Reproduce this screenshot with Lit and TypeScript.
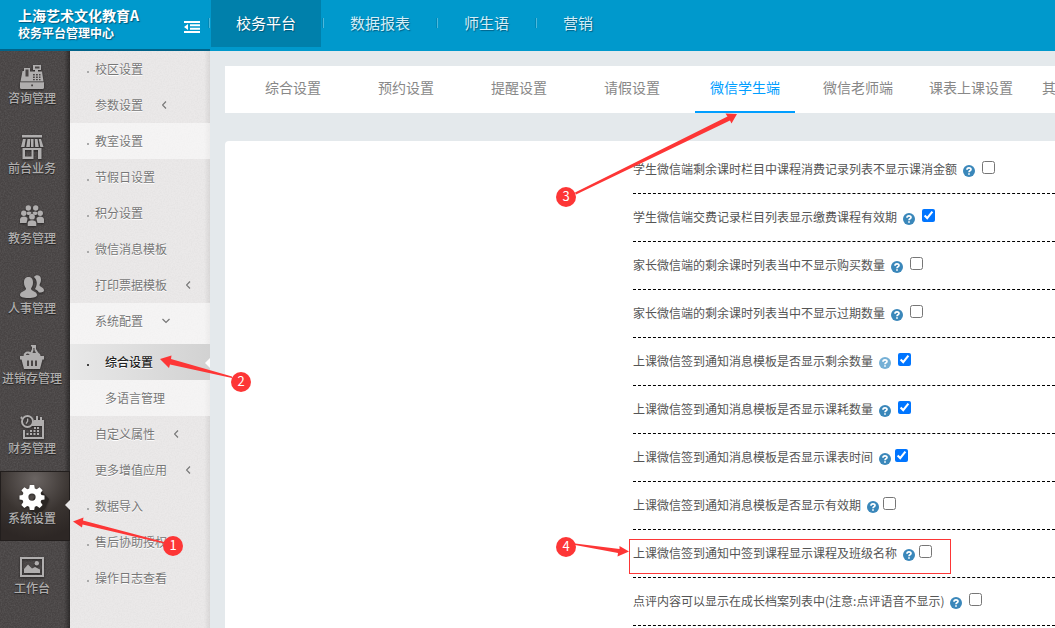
import { LitElement, html, svg, css, nothing } from "lit";
import { customElement, state } from "lit/decorators.js";
import { classMap } from "lit/directives/class-map.js";

const railIcons: Record<string, unknown> = {
  register: svg`<path d="M13 0h8v5h-3v1.500h4l1.500 10h-23L2.500 6H4V3h6v3.500h5V5h-2z"/><path d="M0 17.300h24v5.200a1.500 1.500 0 0 1-1.500 1.500h-21A1.500 1.500 0 0 1 0 22.500z"/><path class="cut" d="M15 1.500h4.500v2H15zM5.500 4.500h3v7h-3zM13 9h1.800v1.500H13zm3 0h1.800v1.500H16zm3 0h1.500v1.500H19zM13 11.500h1.800V13H13zm3 0h1.800V13H16zm3 0h1.500V13H19zM13 14h1.800v1.300H13zm3 0h1.800v1.300H16zm3 0h1.500v1.300H19zM11.200 19.500H13v1.800h-1.800z"/>`,
  shop: svg`<path d="M2 0h20v2.500H2zM3 4h2.800L4.500 12H1zM7.500 4h2.800l-.5 8H6.200zM11 4h2.500v8H11zM14.800 4h2.700l1.300 8h-3.600zM18.800 4H21l2.500 8h-3.200z"/><path d="M2.500 13h19v11H18v-9h-4.500v9h-11zM5 15v6.500h6.500V15z" fill-rule="evenodd"/>`,
  people: svg`<circle cx="8.300" cy="3" r="2.700"/><circle cx="15.700" cy="3" r="2.700"/><circle cx="3.800" cy="8.300" r="2.700"/><circle cx="20.200" cy="8.300" r="2.700"/><circle cx="12" cy="11.700" r="2.900"/><path d="M6.500 7.500c2-2 5-1 5 .5L9.500 10h-2zM17.500 7.500c-2-2-5-1-5 .5l2 2h2zM0 18v-3.500c0-2 2-3 4-3s3.500 1 3.500 2.500L6.500 18zM24 18v-3.500c0-2-2-3-4-3s-3.500 1-3.500 2.500l1 4zM7.700 21v-3c0-2 2-2.800 4.300-2.800s4.300.8 4.300 2.800v3z"/>`,
  users: svg`<path d="M14 2c1.500-2.500 7-2.500 7 2.500 0 2.500-1 4-1.500 5.500 0 2 4.500 2 4.500 5.500 0 1.500-2 2-5 2-1.500-2.500-3.500-2.800-4-3.500 2-3.500 3-8-1-12z"/><path d="M4 7.500C4 3.500 6 2 8.500 2s4.500 1.500 4.500 5.500c0 3-1 4.500-2 6 0 3 6 2.500 6 6.500 0 2-3 3-8.500 3S0 22 0 20c0-4 6-3.500 6-6.500-1-1.500-2-3-2-6z"/>`,
  basket: svg`<path d="M11 0h5v4l2.500 4c1.500.5 2 1.500 2 3h-17c0-3 2-4.500 4.500-4.500 1 0 2 .3 2.500.8L12 4V1.500h-1z"/><path d="M0 11h24v3.500h-1.500L20 24H4L1.500 14.500H0z"/><path class="cut" d="M7 15.500h2V21H7zm4 0h2V21h-2zm4 0h2V21h-2zM13.300 3h1.200v2l1.500 3h-3.500l1-3zM6 10c0-2 3-2 3.500 0z"/>`,
  calendar: svg`<path fill-rule="evenodd" d="M14 5h10v19H3v-9h2v7h17V11H12V9z"/><circle cx="7.500" cy="6.500" r="5.500" fill="none" stroke="currentColor" stroke-width="2"/><path d="M7 3.500h1.300v3L6.500 9l-1-.7L7 6zM16 1h2v5h-2zm4 1h2v4h-2zM14 12h2v2h-2zm3 0h2v2h-2zm-7 3h2v2h-2zm3.500 0h2v2h-2zm3.500 0h2v2h-2zM6.500 18h2v2h-2zm3.500 0h2v2h-2zm3.500 0h2v2h-2zm3.500 0h2v2h-2zM0 3l2-2 1 4z"/>`,
  gear: svg`<path class="cast" d="M20 5l9 9-4 9-8 6-9-7z"/><path fill-rule="evenodd" d="M9.800 0h4.400l.6 3.400 2 .8L19.600 2.200l3 3-2 2.900.8 2 3.100.5v3.800l-3.100.7-.8 2 2 2.800-3 3-2.800-2-2 .9-.6 3.200H9.800l-.6-3.200-2-.9-2.900 2-3-3 2-2.800-.8-2L-.5 14.400v-3.800l3.100-.5.8-2-2-2.900 3-3 2.900 2 1.900-.8zM12 8.500a3.600 3.600 0 1 0 0 7.200 3.600 3.600 0 0 0 0-7.200z"/>`,
  image: svg`<path fill-rule="evenodd" d="M0 2h24v20H0zM2 4v16h20V4z"/><path d="M4 18v-4l4-4.500 4 4 3-1.500 5 2.500V18z"/><circle cx="16.800" cy="8.300" r="2.200"/>`,
};

const rail = [
  ["register", "咨询管理"],
  ["shop", "前台业务"],
  ["people", "教务管理"],
  ["users", "人事管理"],
  ["basket", "进销存管理"],
  ["calendar", "财务管理"],
  ["gear", "系统设置"],
  ["image", "工作台"],
];

interface MenuEntry {
  label: string;
  more?: boolean;
  lit?: boolean;
  children?: string[];
}

const menu: MenuEntry[] = [
  { label: "校区设置" },
  { label: "参数设置", more: true },
  { label: "教室设置", lit: true },
  { label: "节假日设置" },
  { label: "积分设置" },
  { label: "微信消息模板" },
  { label: "打印票据模板", more: true },
  { label: "系统配置", children: ["综合设置", "多语言管理"] },
  { label: "自定义属性", more: true },
  { label: "更多增值应用", more: true },
  { label: "数据导入" },
  { label: "售后协助授权" },
  { label: "操作日志查看" },
];

const tabs = ["综合设置", "预约设置", "提醒设置", "请假设置", "微信学生端", "微信老师端", "课表上课设置", "其它功能设置"];

interface Option {
  label: string;
  on?: boolean;
  tight?: boolean;
  pale?: boolean;
}

const options: Option[] = [
  { label: "学生微信端剩余课时栏目中课程消费记录列表不显示课消金额" },
  { label: "学生微信端交费记录栏目列表显示缴费课程有效期", on: true },
  { label: "家长微信端的剩余课时列表当中不显示购买数量" },
  { label: "家长微信端的剩余课时列表当中不显示过期数量" },
  { label: "上课微信签到通知消息模板是否显示剩余数量", on: true, pale: true },
  { label: "上课微信签到通知消息模板是否显示课耗数量", on: true },
  { label: "上课微信签到通知消息模板是否显示课表时间", on: true, tight: true },
  { label: "上课微信签到通知消息模板是否显示有效期", tight: true },
  { label: "上课微信签到通知中签到课程显示课程及班级名称", tight: true },
  { label: "点评内容可以显示在成长档案列表中(注意:点评语音不显示)" },
];

const grain = css`url("data:image/svg+xml,%3Csvg xmlns='http://www.w3.org/2000/svg' width='120' height='120'%3E%3Cfilter id='n'%3E%3CfeTurbulence type='fractalNoise' baseFrequency='.7' numOctaves='2' stitchTiles='stitch'/%3E%3CfeColorMatrix values='0 0 0 0 .5 0 0 0 0 .5 0 0 0 0 .5 .25 0 0 0 -.08'/%3E%3C/filter%3E%3Crect width='120' height='120' filter='url(%23n)'/%3E%3C/svg%3E")`;

@customElement("side-rail")
class SideRail extends LitElement {
  static styles = css`
    :host {
      display: block;
      width: 70px;
      flex: none;
      background: linear-gradient(to right, transparent 64px, rgba(0, 0, 0, 0.4)), ${grain}, #474343;
    }
    .item {
      position: relative;
      display: flex;
      flex-direction: column;
      align-items: center;
      box-sizing: border-box;
      height: 70px;
      padding: 14px 6px 0 0;
      color: #b0aeae;
      font-size: 12px;
      font-weight: 500;
      line-height: 18px;
      white-space: nowrap;
      text-decoration: none;
      text-shadow: 0 1px 1px #222;
    }
    svg {
      width: 24px;
      height: 24px;
      flex: none;
      overflow: visible;
      fill: currentColor;
      filter: drop-shadow(0 1px 1px rgba(0, 0, 0, 0.5));
    }
    .cut {
      fill: #494545;
    }
    .cast {
      fill: #2a2624;
    }
    .active {
      background: radial-gradient(circle at 50% 8px, #6a6462, #3a3431 36px, #2d2725 60px);
      box-shadow: inset 0 0 0 1px #221e1d;
    }
    .active svg {
      color: #fff;
    }
    .active::after {
      content: "";
      position: absolute;
      right: 0;
      top: 29px;
      border: 5px solid transparent;
      border-right-color: #e8e6e6;
      border-left-width: 0;
    }
  `;
  render() {
    return html`<nav>
      ${rail.map(
        ([icon, label]) => html`<a href="#" class=${classMap({ item: true, active: icon === "gear" })}>
          <svg viewBox="0 0 24 24" aria-hidden="true">${railIcons[icon]}</svg>
          <span>${label}</span>
        </a>`,
      )}
    </nav>`;
  }
}

@customElement("sub-menu")
class SubMenu extends LitElement {
  static styles = css`
    :host {
      display: block;
      flex: 1;
      background: linear-gradient(to right, transparent 134px, rgba(0, 0, 0, 0.07)), ${grain}, #ebe9e9;
    }
    .item {
      position: relative;
      display: flex;
      align-items: center;
      gap: 19px;
      height: 36px;
      padding-left: 25px;
      color: #777;
      font-size: 12px;
      line-height: 18px;
      text-decoration: none;
      text-shadow: 0 1px 0 #fff;
    }
    .dot::before {
      content: "";
      position: absolute;
      left: 17px;
      top: 20px;
      width: 2px;
      height: 2px;
      background: #aaa;
    }
    .lit,
    .group {
      background: rgba(255, 255, 255, 0.5);
    }
    .children {
      padding-top: 5px;
    }
    .child {
      padding-left: 35px;
    }
    .current {
      color: #222;
      font-weight: 500;
      background: linear-gradient(to right, #e8e8e8, #d2d2d2);
    }
    .current::before {
      background: #444;
    }
    .current::after {
      content: "";
      position: absolute;
      right: 0;
      top: 14px;
      border: 5px solid transparent;
      border-right-color: #fff;
      border-left-width: 0;
    }
    svg {
      width: 8px;
      height: 8px;
      fill: none;
      stroke: #777;
      stroke-width: 1.2;
    }
  `;
  render() {
    return html`<nav>
      ${menu.map((m) =>
        m.children
          ? html`<div class="group">
              <a href="#" class="item">${m.label}<svg viewBox="0 0 8 8"><path d="M.5 2 4 5.500 7.500 2" /></svg></a>
              <div class="children">
                ${m.children.map(
                  (c, i) => html`<a href="#" class=${classMap({ item: true, child: true, dot: i === 0, current: i === 0 })}>${c}</a>`,
                )}
              </div>
            </div>`
          : html`<a href="#" class=${classMap({ item: true, dot: !m.more, lit: !!m.lit })}
              >${m.label}${m.more ? html`<svg viewBox="0 0 8 8"><path d="M4 .5.500 4 4 7.500" /></svg>` : nothing}</a
            >`,
      )}
    </nav>`;
  }
}

@customElement("top-nav")
class TopNav extends LitElement {
  static styles = css`
    :host {
      display: flex;
      height: 51px;
      padding-left: 1px;
      background: #0099cc;
    }
    a {
      display: block;
      box-sizing: border-box;
      height: 47px;
      padding: 0 25px;
      color: #d3eef8;
      font-size: 15px;
      line-height: 45px;
      white-space: nowrap;
      text-decoration: none;
      text-shadow: 1px 1px 1px rgba(0, 60, 90, 0.6);
    }
    .active {
      background: #0080ab;
      color: #fff;
    }
    .sep {
      width: 1px;
      height: 10px;
      margin: 18px 1px 0;
      border-left: 1px solid #0087b5;
      background: #4db8db;
    }
  `;
  render() {
    return ["校务平台", "数据报表", "师生语", "营销"].map(
      (t, i) => html`${i ? html`<span class="sep"></span>` : nothing}<a href="#" class=${i ? "" : "active"}>${t}</a>`,
    );
  }
}

@customElement("option-row")
class OptionRow extends LitElement {
  static properties = { option: { attribute: false } };
  declare option: Option;
  static styles = css`
    :host {
      display: flex;
      align-items: center;
      height: 47px;
      border-bottom: 1px dashed #000;
      color: #555;
      font-size: 12px;
      line-height: 18px;
      white-space: nowrap;
    }
    label {
      margin-bottom: 1px;
    }
    button {
      display: flex;
      margin: 3px 7px 0 6px;
      padding: 0;
      border: 0;
      background: none;
      color: #3a87ba;
    }
    .tight {
      margin-right: 4px;
    }
    .pale {
      color: #75b0d6;
    }
    svg {
      width: 12px;
      height: 12px;
    }
    input {
      width: 13px;
      height: 13px;
      margin: 0 0 4px;
    }
  `;
  render() {
    const o = this.option;
    return html`<label for="box">${o.label}</label>
      <button type="button" aria-label="帮助" class=${classMap({ tight: !!o.tight, pale: !!o.pale })}>
        <svg viewBox="0 0 12 12">
          <circle cx="6" cy="6" r="6" fill="currentColor" />
          <path d="M4 4.700C4 2.300 8 2.300 8 4.500 8 5.900 6 5.700 6 7.200M6 8.200v1.600" fill="none" stroke="#fff" stroke-width="1.700" />
        </svg>
      </button>
      <input id="box" type="checkbox" .checked=${!!o.on} />`;
  }
}

@customElement("guide-marks")
class GuideMarks extends LitElement {
  static styles = css`
    :host {
      position: absolute;
      left: 0;
      top: 0;
      pointer-events: none;
    }
    svg {
      display: block;
      width: 955px;
      height: 600px;
      fill: #fd3636;
    }
    text {
      fill: #fff;
      font-size: 13px;
      text-anchor: middle;
    }
    .frame {
      fill: none;
      stroke: #fd3636;
    }
  `;
  render() {
    const pins = [
      [173, 546],
      [241, 382],
      [566, 197],
      [566, 547],
    ];
    return html`<svg viewBox="0 0 955 600">
      <path d="M73 521.500 83.500 517.500 83 520.500 164 542 164 543.500 82.500 524.500 82 527.500z" />
      <path d="M160 359 171.500 355.500 171 359 232 376.500 232 378 170 364.500 169 368z" />
      <path d="M737 114 725.500 113.500 727.500 116.500 575 192.500 576 194.500 730 120.500 731.500 123.500z" />
      <path d="M629 551.500 619.500 546 619.500 549 575 543.500 575 545 618 553 617.500 556.500z" />
      <rect class="frame" x="629.500" y="539.500" width="321" height="34" />
      ${pins.map(([x, y], i) => svg`<circle cx=${x} cy=${y} r="10" /><text x=${x} y=${y + 4}>${i + 1}</text>`)}
    </svg>`;
  }
}

@customElement("app-root")
class AppRoot extends LitElement {
  @state() tab = 4;

  static styles = css`
    :host {
      position: relative;
      display: grid;
      grid-template-columns: 210px minmax(0, 1fr);
      min-height: 100vh;
      overflow: hidden;
      background: #e4e9ec;
      font-family: "Noto Sans CJK SC", "Noto Sans", sans-serif;
    }
    .side,
    .page {
      display: flex;
      flex-direction: column;
    }
    .brand {
      display: flex;
      justify-content: space-between;
      height: 49px;
      padding-left: 18px;
      border-bottom: 2px solid #00648a;
      background: #0099cc;
      color: #fff;
      text-shadow: 1px 1px 1px rgba(0, 60, 90, 0.7);
    }
    .names {
      padding-top: 6px;
      font-weight: 700;
      white-space: nowrap;
    }
    .name {
      font-size: 14px;
      line-height: 18px;
    }
    .sub {
      font-size: 12px;
      line-height: 18px;
    }
    .toggle {
      display: flex;
      margin: 21px 0 0 auto;
      padding: 0;
      border: 0;
      background: none;
      align-self: flex-start;
    }
    .toggle svg {
      width: 16px;
      height: 12px;
      fill: #fff;
    }
    .sep {
      width: 1px;
      height: 10px;
      margin: 18px 0 0 8px;
      border-left: 1px solid #0087b5;
      background: #4db8db;
    }
    .cols {
      display: flex;
      flex: 1;
    }
    .content {
      display: flex;
      flex-direction: column;
      flex: 1;
      padding: 15px 0 0 15px;
    }
    .tabs {
      display: flex;
      gap: 13px;
      height: 47px;
      margin-bottom: 28px;
      padding-left: 18px;
      background: #fff;
      overflow: hidden;
    }
    .tab {
      display: flex;
      flex: none;
      justify-content: center;
      width: 100px;
      padding: 11px 0 0;
      border: 0;
      border-bottom: 2px solid transparent;
      background: none;
      color: #888;
      font: inherit;
      font-size: 14px;
      line-height: 20px;
      white-space: nowrap;
    }
    .on {
      border-color: #009eff;
      color: #009eff;
    }
    .panel {
      flex: 1;
      padding: 5px 0 0 408px;
      border-radius: 4px 0 0 0;
      background: #fff;
    }
  `;

  render() {
    return html`
      <div class="side">
        <header class="brand">
          <div class="names">
            <div class="name">上海艺术文化教育A</div>
            <div class="sub">校务平台管理中心</div>
          </div>
          <button class="toggle" type="button" aria-label="收起菜单">
            <svg viewBox="0 0 16 12"><path d="M0 0h16v2H0zM6 3.300h10v2H6zM6 6.700h10v2H6zM0 10h16v2H0zM0 6l4-3v6z" /></svg>
          </button>
          <span class="sep"></span>
        </header>
        <div class="cols"><side-rail></side-rail><sub-menu></sub-menu></div>
      </div>
      <div class="page">
        <top-nav></top-nav>
        <main class="content">
          <div class="tabs" role="tablist">
            ${tabs.map(
              (t, i) => html`<button
                role="tab"
                aria-selected=${i === this.tab}
                class=${classMap({ tab: true, on: i === this.tab })}
                @click=${() => (this.tab = i)}
              >${t}</button>`,
            )}
          </div>
          <section class="panel">${options.map((o) => html`<option-row .option=${o}></option-row>`)}</section>
        </main>
      </div>
      <guide-marks></guide-marks>
    `;
  }
}
